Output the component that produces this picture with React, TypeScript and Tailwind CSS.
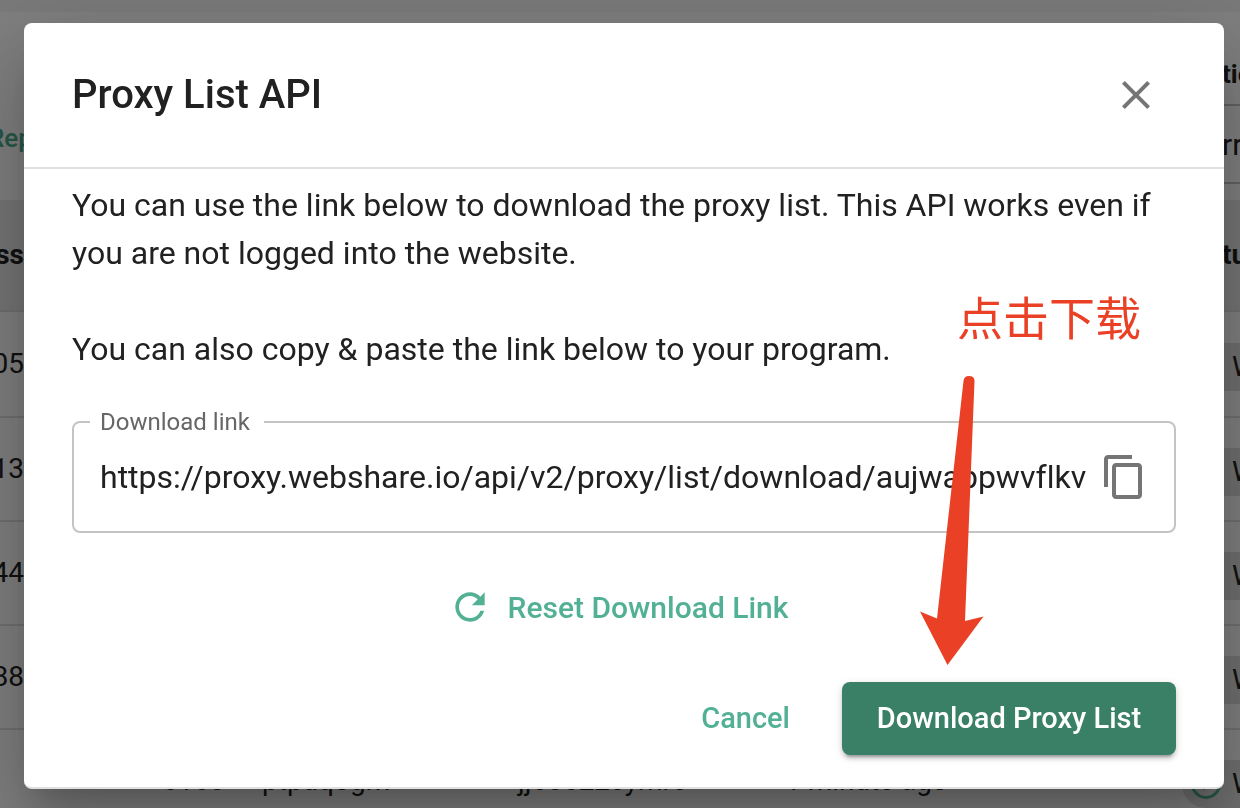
import React from "react";

type Proxy = {
  address: string;
  port?: string;
  username?: string;
  password?: string;
  checked?: string;
};

const proxies: Proxy[] = [
  { address: "05" },
  { address: "13" },
  { address: "44" },
  { address: "88" },
  {
    address: "",
    port: "6168",
    username: "ptpuqogm",
    password: "jj68622cymre",
    checked: "1 minute ago",
  },
];

function CloseIcon() {
  return (
    <svg viewBox="0 0 24 24" className="size-12" fill="currentColor" aria-hidden="true">
      <path d="M19 6.41 17.59 5 12 10.59 6.41 5 5 6.41 10.59 12 5 17.59 6.41 19 12 13.41 17.59 19 19 17.59 13.41 12z" />
    </svg>
  );
}

function CopyIcon() {
  return (
    <svg viewBox="0 0 24 24" className="size-12" fill="currentColor" aria-hidden="true">
      <path d="M16 1H4c-1.1 0-2 .9-2 2v14h2V3h12V1zm3 4H8c-1.1 0-2 .9-2 2v14c0 1.1.9 2 2 2h11c1.1 0 2-.9 2-2V7c0-1.1-.9-2-2-2zm0 16H8V7h11v14z" />
    </svg>
  );
}

function RefreshIcon() {
  return (
    <svg viewBox="0 0 24 24" className="size-11" fill="currentColor" aria-hidden="true">
      <path d="M17.65 6.35C16.2 4.9 14.21 4 12 4c-4.42 0-7.99 3.58-7.99 8s3.57 8 7.99 8c3.73 0 6.84-2.55 7.73-6h-2.08c-.82 2.33-3.04 4-5.65 4-3.31 0-6-2.69-6-6s2.69-6 6-6c1.66 0 3.14.69 4.22 1.78L13 11h7V4l-2.35 2.35z" />
    </svg>
  );
}

function StatusChip() {
  return (
    <div className="flex h-12 w-60 items-center gap-2.5 rounded-full bg-[#e0e0e0] pl-2">
      <svg viewBox="0 0 32 32" className="size-8 shrink-0" fill="none" stroke="#4caf8e" strokeWidth="3" aria-hidden="true">
        <circle cx="16" cy="16" r="13.5" />
        <path d="m10 16 4 4 8-9" />
      </svg>
      <span>Working</span>
    </div>
  );
}

function ProxyPage() {
  return (
    <div className="h-screen overflow-hidden bg-white text-[28px] text-[#212121]">
      <div className="h-3 bg-[#f5f5f5]" />
      <div className="flex h-47 items-start justify-between whitespace-nowrap">
        <a href="#replace" className="mt-27 -ml-3 text-[26px] leading-9 font-medium text-[#4caf8e]">
          Rep
        </a>
        <div className="mt-11 w-[18px]">
          <div className="text-[26px] leading-9 font-bold">tion</div>
          <div className="mt-3 flex h-20 items-center border-y-2 border-[#c4c4c4] text-[30px]">rr</div>
        </div>
      </div>
      <table className="w-full table-fixed border-separate border-spacing-0 text-left whitespace-nowrap">
        <colgroup>
          <col className="w-6" />
          <col className="w-[138px]" />
          <col className="w-[100px]" />
          <col className="w-64" />
          <col className="w-[267px]" />
          <col className="w-[397px]" />
          <col />
        </colgroup>
        <thead>
          <tr className="h-28 bg-[#ebebeb] font-bold *:border-b-2 *:border-[#e0e0e0]">
            <th scope="col" className="p-0">
              <div className="flex justify-end">ss</div>
            </th>
            <th colSpan={5} />
            <th scope="col" className="p-0">
              <div className="pl-10">tus</div>
            </th>
          </tr>
        </thead>
        <tbody>
          {proxies.map((proxy, index) => (
            <tr key={index} className="h-26 *:border-b-2 *:border-[#e0e0e0] first:h-[106px]">
              <td className="p-0">
                <div className="flex justify-end">{proxy.address}</div>
              </td>
              <td />
              <td className="p-0">{proxy.port}</td>
              <td className="p-0">{proxy.username}</td>
              <td className="p-0">{proxy.password}</td>
              <td className="p-0">{proxy.checked}</td>
              <td className="px-0 pt-1.5 pb-0">
                <StatusChip />
              </td>
            </tr>
          ))}
        </tbody>
      </table>
    </div>
  );
}

function Annotation() {
  return (
    <div className="pointer-events-none absolute top-[262px] right-[83px] flex flex-col items-start text-[#ea4025]">
      <div className="h-[88px] font-['Noto_Sans_CJK_SC',sans-serif] text-[46px] leading-[60px]">点击下载</div>
      <svg viewBox="0 0 66 292" className="-ml-[38px] h-[292px] w-[66px]" fill="currentColor" aria-hidden="true">
        <path d="M44.500 8Q45 3 50 3Q55.500 3 55.500 8L46 248L64.500 243.500L28.500 292L1 238.500L18 245.500Z" />
      </svg>
    </div>
  );
}

function ProxyListDialog() {
  return (
    <div className="fixed inset-0 bg-black/50 pt-[23px] pr-4 pl-6">
      <section
        role="dialog"
        aria-modal="true"
        aria-labelledby="dialog-title"
        className="relative rounded-lg border-b-2 border-[#e0e0e0] bg-white text-[#212121] shadow-[0_22px_30px_-14px_rgba(0,0,0,0.2),0_48px_76px_6px_rgba(0,0,0,0.14),0_18px_92px_16px_rgba(0,0,0,0.12)]"
      >
        <header className="flex h-[146px] items-center justify-between border-b-2 border-[#e0e0e0] pr-16 pl-12">
          <h1 id="dialog-title" className="text-[40px] leading-[64px] font-medium">
            Proxy List API
          </h1>
          <button type="button" aria-label="Close" className="text-[#757575]">
            <CloseIcon />
          </button>
        </header>

        <div className="px-12 pt-3">
          <p className="text-[32px] leading-12">
            You can use the link below to download the proxy list. This API works even if
            <br />
            you are not logged into the website.
          </p>
          <p className="mt-12 text-[32px] leading-12">
            You can also copy &amp; paste the link below to your program.
          </p>

          <fieldset className="mt-9 min-w-0 rounded-lg border-2 border-[#c4c4c4] px-[26px] pb-3">
            <legend className="-ml-[10px] pr-[14px] pl-[10px] text-2xl leading-[26px] text-[#666666]">
              <label htmlFor="download-link">Download link</label>
            </legend>
            <div className="flex h-[84px] items-center">
              <input
                id="download-link"
                type="text"
                readOnly
                defaultValue="https://proxy.webshare.io/api/v2/proxy/list/download/aujwabpwvflkv"
                className="h-12 min-w-0 flex-1 bg-transparent text-[32px] outline-none [font-variant-ligatures:none]"
              />
              <button type="button" aria-label="Copy download link" className="text-[#757575]">
                <CopyIcon />
              </button>
            </div>
          </fieldset>

          <div className="mt-9 flex justify-center">
            <button type="button" className="flex h-[76px] items-center gap-4 pr-3 text-[30px] font-medium text-[#52b095]">
              <RefreshIcon />
              Reset Download Link
            </button>
          </div>
        </div>

        <footer className="flex items-center justify-end gap-5 px-12 pt-[37px] pb-8">
          <button type="button" className="h-[73px] px-8 text-[29px] font-medium text-[#52b095]">
            Cancel
          </button>
          <button
            type="button"
            className="h-[73px] min-w-[334px] rounded-lg bg-[#398067] px-8 text-[29px] font-medium text-white shadow-[0_6px_2px_-4px_rgba(0,0,0,0.2),0_4px_4px_0_rgba(0,0,0,0.14),0_2px_10px_0_rgba(0,0,0,0.12)]"
          >
            Download Proxy List
          </button>
        </footer>

        <Annotation />
      </section>
    </div>
  );
}

export default function App() {
  return (
    <div className="font-[Roboto,sans-serif]">
      <ProxyPage />
      <ProxyListDialog />
    </div>
  );
}
